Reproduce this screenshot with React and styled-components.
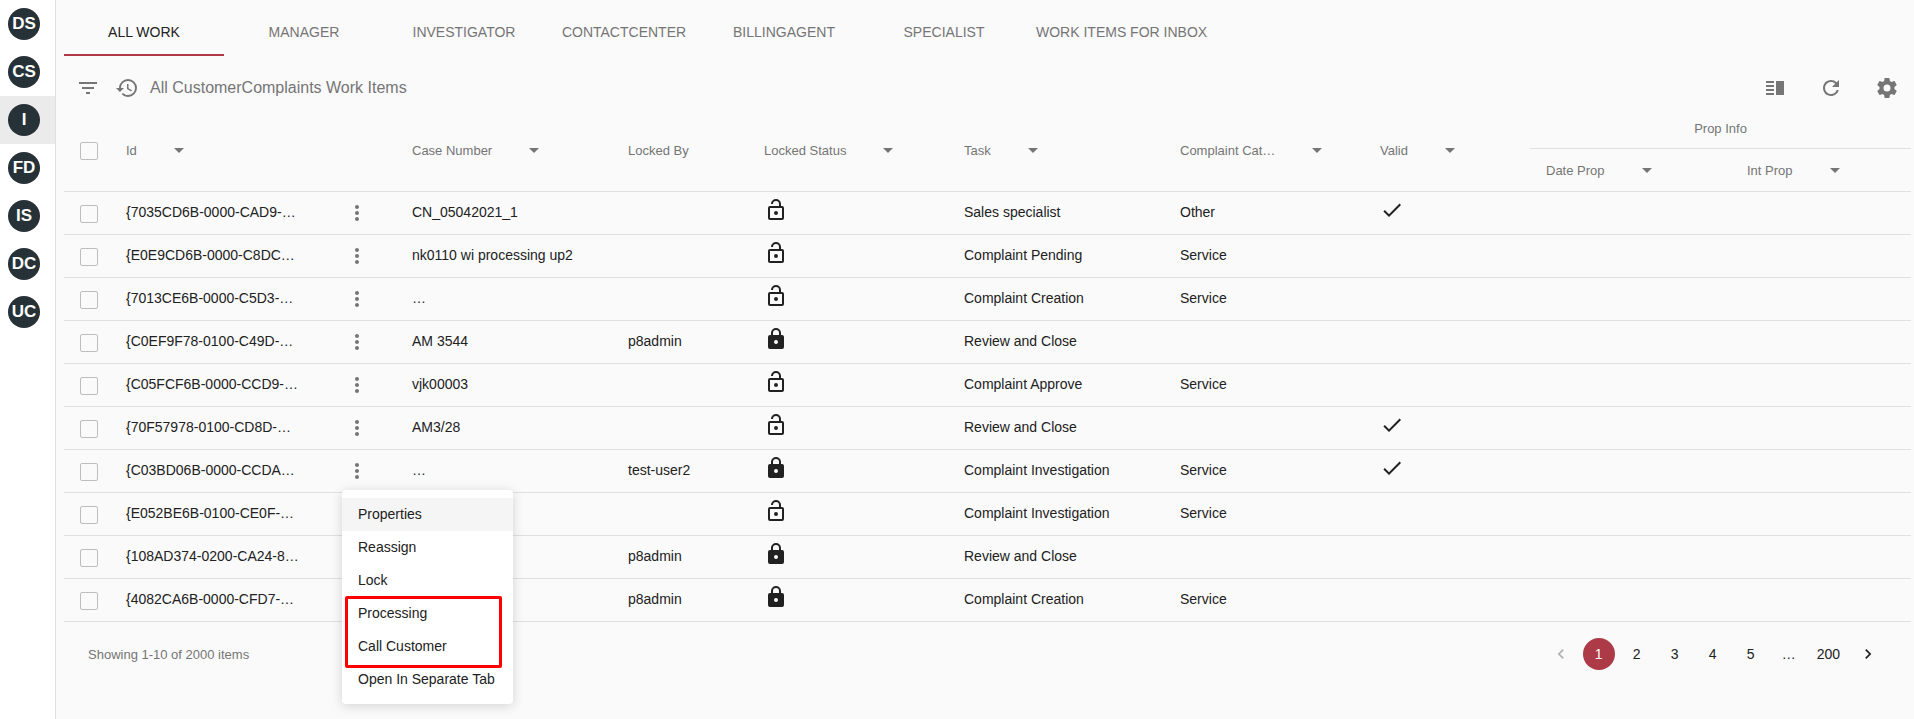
import React, { useState } from 'react';
import styled, { createGlobalStyle, css } from 'styled-components';
import {
  MdFilterList,
  MdHistory,
  MdVerticalSplit,
  MdRefresh,
  MdArrowDropDown,
  MdMoreVert,
  MdCheck,
  MdChevronLeft,
  MdChevronRight,
} from 'react-icons/md';

const GlobalStyle = createGlobalStyle`
  *, *::before, *::after { box-sizing: border-box; }
  body {
    margin: 0;
    background: #fafafa;
    color: #212121;
    font-family: "Liberation Sans", Arial, sans-serif;
    font-size: 14px;
  }
  button {
    font: inherit;
    color: inherit;
    background: none;
    border: 0;
    padding: 0;
    cursor: pointer;
  }
`;

const AppBarEdge = styled.header`
  position: relative;
  z-index: 2;
  height: 0;
  box-shadow: 0 2px 4px -1px rgba(0, 0, 0, 0.2), 0 4px 5px rgba(0, 0, 0, 0.14),
    0 1px 10px rgba(0, 0, 0, 0.12);
`;

const Layout = styled.div`
  display: flex;
  min-height: 100vh;
`;

const Sidebar = styled.nav`
  flex: none;
  width: 56px;
  background: #fff;
  border-right: 1px solid #e0e0e0;
`;

const SolutionLink = styled.a`
  display: flex;
  align-items: center;
  height: 48px;
  padding-left: 8px;
  text-decoration: none;
  background: ${(p) => (p.$active ? '#ebebeb' : 'transparent')};
`;

const Avatar = styled.span`
  display: flex;
  align-items: center;
  justify-content: center;
  width: 32px;
  height: 32px;
  border-radius: 50%;
  background: #263238;
  color: #fff;
  font-size: 17px;
  font-weight: 700;
  line-height: 32px;
`;

const Main = styled.main`
  flex: 1;
  min-width: 0;
  padding: 0 3px 0 8px;
`;

const Tabs = styled.div`
  display: flex;
`;

const Tab = styled.button`
  min-width: 160px;
  height: 56px;
  padding: 10px 12px 0;
  border-bottom: 2px solid ${(p) => (p.$active ? '#ad3a47' : 'transparent')};
  color: ${(p) => (p.$active ? '#212121' : '#757575')};
  text-transform: uppercase;
  white-space: nowrap;
`;

const Toolbar = styled.div`
  display: flex;
  align-items: center;
  gap: 15px;
  padding: 16px 12px 5px;
  color: #757575;
`;

const Title = styled.h1`
  flex: 1;
  margin: 0 0 0 -4px;
  font-size: 16px;
  font-weight: 400;
  line-height: 20px;
`;

const IconButton = styled.button`
  display: flex;
  align-items: center;
  height: 32px;
  font-size: 24px;
  color: #757575;
`;

const Actions = styled.div`
  display: flex;
  gap: 32px;
`;

const Table = styled.table`
  width: 100%;
  table-layout: fixed;
  border-collapse: separate;
  border-spacing: 0;
`;

const HeadCell = styled.th`
  height: ${(p) => (p.$group ? 40 : 43)}px;
  padding: 0 0 0 16px;
  border-bottom: 1px solid #e0e0e0;
  color: #757575;
  font-size: 13px;
  font-weight: 400;
  text-align: left;
  white-space: nowrap;
  ${(p) =>
    p.$group &&
    css`
      padding: 0;
      text-align: center;
    `}
`;

const HeadLabel = styled.span`
  display: flex;
  align-items: center;
  gap: 30px;
`;

const SortButton = styled.button`
  display: flex;
  font-size: 24px;
`;

const cellBottomPadding = { control: 0, text: 2, icon: 4 };

const Cell = styled.td`
  position: relative;
  height: 43px;
  padding: 0 0 ${(p) => cellBottomPadding[p.$kind || 'text']}px 16px;
  border-bottom: 1px solid #e0e0e0;
  white-space: nowrap;
`;

const StatusIcon = styled.svg`
  width: 24px;
  height: 24px;
  fill: currentColor;
`;

const CheckMark = styled(MdCheck)`
  font-size: 24px;
`;

const RowMenuButton = styled.button`
  display: flex;
  margin-left: -11px;
  color: #757575;
  font-size: 24px;
`;

const Checkbox = styled.input.attrs({ type: 'checkbox' })`
  appearance: none;
  display: block;
  width: 18px;
  height: 18px;
  margin: 2px 0 0;
  border: 1px solid #bdbdbd;
  border-radius: 2px;
`;

const Menu = styled.div`
  position: absolute;
  z-index: 3;
  top: 40px;
  left: 2px;
  width: max-content;
  min-width: 171px;
  padding: 8px 0;
  border-radius: 4px;
  background: #fff;
  box-shadow: 0 2px 12px rgba(0, 0, 0, 0.16);
`;

const MenuItem = styled.button`
  display: block;
  width: 100%;
  height: 33px;
  padding: 0 16px 2px;
  text-align: left;
  background: ${(p) => (p.$active ? '#f5f5f5' : 'transparent')};
`;

const MenuGroup = styled.div`
  position: relative;
`;

const Highlight = styled.div`
  position: absolute;
  inset: -1px 11px -5px 3px;
  border: 3px solid #f00;
  border-radius: 2px;
  pointer-events: none;
`;

const Footer = styled.footer`
  display: flex;
  align-items: center;
  justify-content: space-between;
  padding: 16px 24px;
`;

const Summary = styled.span`
  color: #757575;
  font-size: 13px;
`;

const Pagination = styled.nav`
  display: flex;
  gap: 6px;
  margin-right: 3px;
`;

const PageButton = styled.button`
  display: flex;
  align-items: center;
  justify-content: center;
  min-width: 32px;
  height: 32px;
  padding: 0 6px;
  border-radius: 16px;
  ${(p) =>
    p.$current &&
    css`
      background: #ad3a47;
      color: #fff;
    `}
  &:disabled {
    color: #b0b0b0;
  }
  svg {
    font-size: 20px;
  }
`;

const Ellipsis = styled.span`
  width: 32px;
  line-height: 32px;
  text-align: center;
`;

const solutions = ['DS', 'CS', 'I', 'FD', 'IS', 'DC', 'UC'];

const tabs = [
  'All Work',
  'Manager',
  'Investigator',
  'ContactCenter',
  'BillingAgent',
  'Specialist',
  'Work Items for Inbox',
];

const columnWidths = [46, 230, 56, 216, 136, 200, 216, 200, 166, 201, 180];

const rows = [
  { id: '{7035CD6B-0000-CAD9-…', caseNumber: 'CN_05042021_1', task: 'Sales specialist', category: 'Other', valid: true },
  { id: '{E0E9CD6B-0000-C8DC…', caseNumber: 'nk0110 wi processing up2', task: 'Complaint Pending', category: 'Service' },
  { id: '{7013CE6B-0000-C5D3-…', caseNumber: '…', task: 'Complaint Creation', category: 'Service' },
  { id: '{C0EF9F78-0100-C49D-…', caseNumber: 'AM 3544', lockedBy: 'p8admin', task: 'Review and Close' },
  { id: '{C05FCF6B-0000-CCD9-…', caseNumber: 'vjk00003', task: 'Complaint Approve', category: 'Service' },
  { id: '{70F57978-0100-CD8D-…', caseNumber: 'AM3/28', task: 'Review and Close', valid: true },
  { id: '{C03BD06B-0000-CCDA…', caseNumber: '…', lockedBy: 'test-user2', task: 'Complaint Investigation', category: 'Service', valid: true, menu: true },
  { id: '{E052BE6B-0100-CE0F-…', task: 'Complaint Investigation', category: 'Service' },
  { id: '{108AD374-0200-CA24-8…', lockedBy: 'p8admin', task: 'Review and Close' },
  { id: '{4082CA6B-0000-CFD7-…', lockedBy: 'p8admin', task: 'Complaint Creation', category: 'Service' },
];

function LockIcon({ locked }) {
  return (
    <StatusIcon viewBox="0 0 24 24" role="img" aria-label={locked ? 'Locked' : 'Unlocked'}>
      {locked ? (
        <path d="M12 17a2 2 0 1 0 0-4 2 2 0 0 0 0 4m6-9a2 2 0 0 1 2 2v10a2 2 0 0 1-2 2H6a2 2 0 0 1-2-2V10a2 2 0 0 1 2-2h1V6a5 5 0 0 1 10 0v2h1m-6-5a3 3 0 0 0-3 3v2h6V6a3 3 0 0 0-3-3z" />
      ) : (
        <path d="M18 20V10H6v10h12m0-12a2 2 0 0 1 2 2v10a2 2 0 0 1-2 2H6a2 2 0 0 1-2-2V10a2 2 0 0 1 2-2h9V6a3 3 0 0 0-6 0H7a5 5 0 0 1 10 0v2h1m-6 9a2 2 0 1 0 0-4 2 2 0 0 0 0 4z" />
      )}
    </StatusIcon>
  );
}

function CogIcon() {
  return (
    <StatusIcon viewBox="0 0 24 24" aria-hidden="true">
      <path d="M12 15.5A3.5 3.5 0 0 1 8.5 12 3.5 3.5 0 0 1 12 8.5a3.5 3.5 0 0 1 3.5 3.5 3.5 3.5 0 0 1-3.5 3.5m7.43-2.53c.04-.32.07-.64.07-.97s-.03-.66-.07-1l2.11-1.63c.19-.15.24-.42.12-.64l-2-3.46c-.12-.22-.39-.31-.61-.22l-2.49 1c-.52-.39-1.06-.73-1.69-.98l-.37-2.65A.506.506 0 0 0 14 2h-4c-.25 0-.46.18-.5.42l-.37 2.65c-.63.25-1.17.59-1.69.98l-2.49-1c-.22-.09-.49 0-.61.22l-2 3.46c-.13.22-.07.49.12.64L4.57 11c-.04.34-.07.67-.07 1s.03.65.07.97l-2.11 1.66c-.19.15-.25.42-.12.64l2 3.46c.12.22.39.3.61.22l2.49-1.01c.52.4 1.06.74 1.69.99l.37 2.65c.04.24.25.42.5.42h4c.25 0 .46-.18.5-.42l.37-2.65c.63-.26 1.17-.59 1.69-.99l2.49 1.01c.22.08.49 0 .61-.22l2-3.46c.12-.22.07-.49-.12-.64z" />
    </StatusIcon>
  );
}

function Head({ label, sortable = true, rowSpan }) {
  return (
    <HeadCell rowSpan={rowSpan} scope="col">
      <HeadLabel>
        {label}
        {sortable && (
          <SortButton aria-label={`${label} options`}>
            <MdArrowDropDown />
          </SortButton>
        )}
      </HeadLabel>
    </HeadCell>
  );
}

function RowMenu() {
  return (
    <Menu role="menu">
      <MenuItem role="menuitem" $active>Properties</MenuItem>
      <MenuItem role="menuitem">Reassign</MenuItem>
      <MenuItem role="menuitem">Lock</MenuItem>
      <MenuGroup role="group">
        <MenuItem role="menuitem">Processing</MenuItem>
        <MenuItem role="menuitem">Call Customer</MenuItem>
        <Highlight />
      </MenuGroup>
      <MenuItem role="menuitem">Open In Separate Tab</MenuItem>
    </Menu>
  );
}

export default function App() {
  const [activeTab, setActiveTab] = useState(tabs[0]);

  return (
    <>
      <GlobalStyle />
      <AppBarEdge />
      <Layout>
        <Sidebar aria-label="Solutions">
          {solutions.map((name) => (
            <SolutionLink key={name} href="#" $active={name === 'I'}>
              <Avatar>{name}</Avatar>
            </SolutionLink>
          ))}
        </Sidebar>
        <Main>
          <Tabs role="tablist">
            {tabs.map((tab) => (
              <Tab
                key={tab}
                role="tab"
                aria-selected={tab === activeTab}
                $active={tab === activeTab}
                onClick={() => setActiveTab(tab)}
              >
                {tab}
              </Tab>
            ))}
          </Tabs>
          <Toolbar>
            <IconButton aria-label="Filter"><MdFilterList /></IconButton>
            <IconButton aria-label="History"><MdHistory /></IconButton>
            <Title>All CustomerComplaints Work Items</Title>
            <Actions>
              <IconButton aria-label="Split view"><MdVerticalSplit /></IconButton>
              <IconButton aria-label="Refresh"><MdRefresh /></IconButton>
              <IconButton aria-label="Settings"><CogIcon /></IconButton>
            </Actions>
          </Toolbar>
          <Table>
            <colgroup>
              {columnWidths.map((width, i) => (
                <col key={i} width={width} />
              ))}
            </colgroup>
            <thead>
              <tr>
                <HeadCell rowSpan={2}><Checkbox aria-label="Select all" /></HeadCell>
                <Head label="Id" rowSpan={2} />
                <HeadCell rowSpan={2} />
                <Head label="Case Number" rowSpan={2} />
                <Head label="Locked By" rowSpan={2} sortable={false} />
                <Head label="Locked Status" rowSpan={2} />
                <Head label="Task" rowSpan={2} />
                <Head label="Complaint Cat…" rowSpan={2} />
                <Head label="Valid" rowSpan={2} />
                <HeadCell colSpan={2} scope="colgroup" $group>Prop Info</HeadCell>
              </tr>
              <tr>
                <Head label="Date Prop" />
                <Head label="Int Prop" />
              </tr>
            </thead>
            <tbody>
              {rows.map((row) => (
                <tr key={row.id}>
                  <Cell $kind="control"><Checkbox aria-label={`Select ${row.id}`} /></Cell>
                  <Cell>{row.id}</Cell>
                  <Cell $kind="control">
                    <RowMenuButton aria-label="Row actions"><MdMoreVert /></RowMenuButton>
                    {row.menu && <RowMenu />}
                  </Cell>
                  <Cell>{row.caseNumber}</Cell>
                  <Cell>{row.lockedBy}</Cell>
                  <Cell $kind="icon"><LockIcon locked={Boolean(row.lockedBy)} /></Cell>
                  <Cell>{row.task}</Cell>
                  <Cell>{row.category}</Cell>
                  <Cell $kind="icon">{row.valid && <CheckMark aria-label="Yes" />}</Cell>
                  <Cell />
                  <Cell />
                </tr>
              ))}
            </tbody>
          </Table>
          <Footer>
            <Summary>Showing 1-10 of 2000 items</Summary>
            <Pagination aria-label="Pages">
              <PageButton disabled aria-label="Previous page"><MdChevronLeft /></PageButton>
              <PageButton $current aria-current="page">1</PageButton>
              <PageButton>2</PageButton>
              <PageButton>3</PageButton>
              <PageButton>4</PageButton>
              <PageButton>5</PageButton>
              <Ellipsis>…</Ellipsis>
              <PageButton>200</PageButton>
              <PageButton aria-label="Next page"><MdChevronRight /></PageButton>
            </Pagination>
          </Footer>
        </Main>
      </Layout>
    </>
  );
}
